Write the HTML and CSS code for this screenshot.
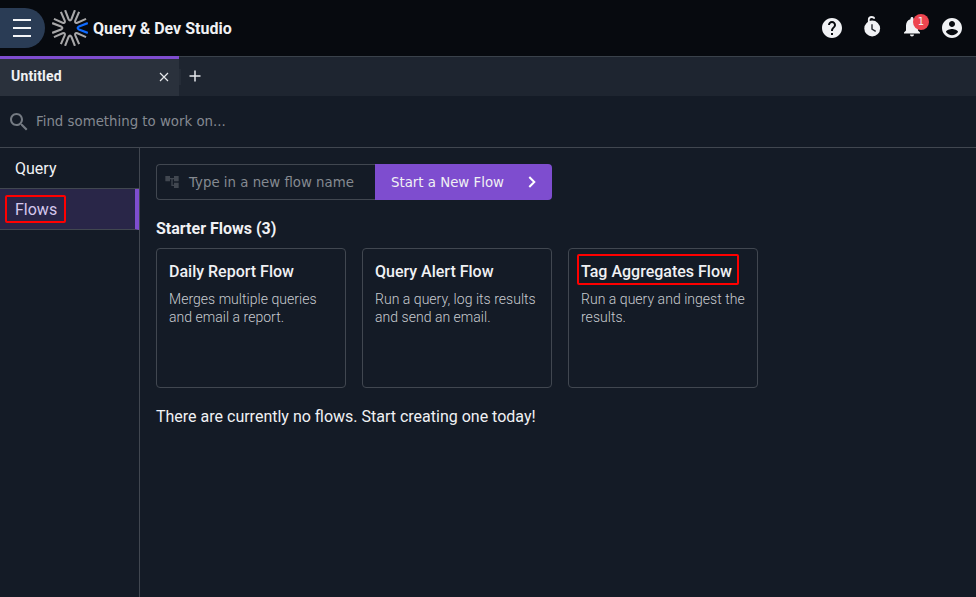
FILE: index.html
```html
<!DOCTYPE html>
<html lang="en">
<head>
<meta charset="utf-8">
<title>Query &amp; Dev Studio</title>
<link rel="stylesheet" href="styles.css">
</head>
<body>
<header class="topbar">
  <button class="menu" aria-label="Menu"><span></span><span></span><span></span></button>
  <svg class="logo" viewBox="-18 -18 36 36">
    <defs><path id="ray" d="M17.8-4.9 9-1.500Q6.200 0 9 1.500L17.8 4.9"/></defs>
    <use href="#ray" transform="rotate(45)"/><use href="#ray" transform="rotate(90)"/><use href="#ray" transform="rotate(135)"/><use href="#ray" transform="rotate(180)"/><use href="#ray" transform="rotate(225)"/><use href="#ray" transform="rotate(270)"/><use href="#ray" transform="rotate(315)"/><use class="blue" href="#ray"/>
  </svg>
  <h1>Query &amp; Dev Studio</h1>
  <nav class="actions">
    <svg viewBox="0 0 24 24"><path d="M12 2C6.48 2 2 6.48 2 12s4.480 10 10 10 10-4.480 10-10S17.520 2 12 2zm1 17h-2v-2h2v2zm2.070-7.750-.9.920C13.450 12.900 13 13.500 13 15h-2v-.5c0-1.100.450-2.100 1.170-2.830l1.240-1.260c.370-.360.590-.860.590-1.410 0-1.100-.9-2-2-2s-2 .9-2 2H8c0-2.210 1.790-4 4-4s4 1.790 4 4c0 .880-.360 1.680-.930 2.250z"/></svg>
    <svg viewBox="0 0 24 24"><circle cx="12.200" cy="12.500" r="7.900"/><path class="hook" d="M8.800 6V3.500Q8.800 1 11.500 1 14.200 1 14.200 2.800"/><path class="hands" d="M12 8.200v5l3.700 2.200"/></svg>
    <span class="alerts"><svg viewBox="0 0 24 24"><path d="M12 20.500c1.100 0 2-.9 2-2h-4c0 1.100.890 2 2 2zm6-6v-5c0-3.070-1.640-5.640-4.500-6.320V2.500C13.500 1.670 12.830 1 12 1s-1.500.670-1.500 1.500v.680C7.630 3.860 6 6.420 6 9.500v5l-2 2v1h16v-1l-2-2z"/></svg><b class="badge">1</b></span>
    <svg viewBox="0 0 24 24"><path d="M12 2C6.480 2 2 6.480 2 12s4.480 10 10 10 10-4.480 10-10S17.520 2 12 2zm0 3c1.660 0 3 1.340 3 3s-1.340 3-3 3-3-1.340-3-3 1.340-3 3-3zm0 14.200c-2.500 0-4.710-1.280-6-3.220.030-1.990 4-3.080 6-3.080 1.990 0 5.970 1.090 6 3.080-1.290 1.940-3.500 3.220-6 3.220z"/></svg>
  </nav>
</header>
<div class="tabs">
  <div class="tab">Untitled<svg viewBox="0 0 10 10"><path d="M1 1l8 8M9 1 1 9"/></svg></div>
  <div class="divider"></div>
  <svg class="plus" viewBox="0 0 12 12"><path d="M6 .5v11M.5 6h11"/></svg>
</div>
<div class="search">
  <svg viewBox="0 0 24 24"><path d="M15.500 14h-.790l-.280-.270C15.410 12.590 16 11.110 16 9.500 16 5.910 13.090 3 9.500 3S3 5.910 3 9.500 5.910 16 9.500 16c1.610 0 3.090-.590 4.230-1.570l.270.280v.790l5 4.990L20.490 19l-4.990-5zm-6 0C7.010 14 5 11.990 5 9.500S7.010 5 9.500 5 14 7.010 14 9.500 11.990 14 9.500 14z"/></svg>
  <span>Find something to work on...</span>
</div>
<div class="workspace">
  <aside>
    <div class="item">Query</div>
    <div class="item selected"><span class="mark">Flows</span></div>
  </aside>
  <main>
    <div class="create">
      <div class="name"><svg viewBox="0 0 24 24"><path d="M22 11V3h-7v3H9V3H2v8h7V8h2v10h4v3h7v-8h-7v3h-2V8h2v3z"/></svg><span>Type in a new flow name</span></div>
      <button class="start"><span>Start a New Flow</span><svg viewBox="0 0 8 12"><path d="M1.300 1l5 5-5 5"/></svg></button>
    </div>
    <h2>Starter Flows (3)</h2>
    <div class="cards">
      <article><h3>Daily Report Flow</h3><p>Merges multiple queries<br>and email a report.</p></article>
      <article><h3>Query Alert Flow</h3><p>Run a query, log its results<br>and send an email.</p></article>
      <article><h3><span class="mark">Tag Aggregates Flow</span></h3><p>Run a query and ingest the<br>results.</p></article>
    </div>
    <p class="empty">There are currently no flows. Start creating one today!</p>
  </main>
</div>
</body>
</html>
```
FILE: styles.css
```css
* { box-sizing: border-box; }
body { margin: 0; height: 597px; display: flex; flex-direction: column; overflow: hidden; background: #141b26; color: #f0f1f4; font: 16px Roboto, sans-serif; }
h1, h2, h3, p { margin: 0; }
button { border: 0; color: inherit; }
.topbar { height: 56px; flex: none; display: flex; align-items: center; background: #070a0f; }
.menu { width: 45px; height: 40px; padding: 0 0 0 13px; display: flex; flex-direction: column; justify-content: center; gap: 6px; background: #2a3c55; border-radius: 0 20px 20px 0; }
.menu span { width: 18px; height: 2px; background: #f4f5f7; }
.logo { width: 36px; height: 36px; margin-left: 7px; fill: none; stroke: #a7a7a8; stroke-width: 2.1; }
.logo .blue { stroke: #0f6bff; }
h1 { margin-left: 5px; padding-top: 2px; font-size: 16px; line-height: 20px; font-weight: 700; }
.actions { display: flex; gap: 16px; margin-left: auto; margin-right: 12px; }
.actions svg { display: block; width: 24px; height: 24px; fill: #f0f1f4; }
.actions .hook { fill: none; stroke: #f0f1f4; stroke-width: 1.8; }
.actions .hands { fill: none; stroke: #24282e; stroke-width: 1.4; }
.alerts { position: relative; }
.badge { position: absolute; left: 13px; top: -2px; width: 16px; height: 16px; border-radius: 50%; background: #ee4550; font: 10px/16px "DejaVu Sans", sans-serif; text-align: center; }
.tabs { height: 40px; flex: none; display: flex; align-items: center; background: #1e2530; border-top: 1px solid #3a424b; }
.tab { width: 179px; height: 40px; margin-top: -1px; padding: 0 10px 4px 11px; display: flex; align-items: center; justify-content: space-between; background: #2a313c; border-top: 3px solid #7e4dcf; font-size: 14px; line-height: 16px; font-weight: 700; letter-spacing: 0.16px; }
.tab svg { width: 10px; height: 10px; fill: none; stroke: #e6e8eb; stroke-width: 1.2; position: relative; top: 1px; }
.divider { width: 2px; height: 16px; background: #252c37; }
.plus { width: 12px; height: 12px; margin: 0 0 1px 8px; fill: none; stroke: #e6e8eb; stroke-width: 1.5; }
.search { height: 52px; flex: none; display: flex; align-items: center; padding: 0 0 1px 7px; border-bottom: 1px solid #414750; color: #848991; font: 13.333px "DejaVu Sans", sans-serif; }
.search svg { width: 24px; height: 24px; margin: 1px 5px 0 0; fill: #747a82; }
.workspace { flex: 1; display: flex; }
aside { width: 140px; border-right: 1px solid #414750; }
.item { height: 41px; display: flex; align-items: center; padding-left: 15px; border-bottom: 1px solid #414750; }
.selected { background: #292648; color: #d5c8ee; border-right: 4px solid #7e4dcf; padding-left: 5px; }
.mark { display: inline-block; border: 2px solid #f00; border-radius: 2px; }
.selected .mark { width: 61px; height: 28px; padding-left: 8px; line-height: 25px; }
main { flex: 1; padding: 16px; }
.create { display: flex; height: 36px; }
.name { width: 219px; display: flex; align-items: center; padding-left: 7px; border: 1px solid #414750; border-right: 0; border-radius: 4px 0 0 4px; color: #858a91; font: 13.333px "DejaVu Sans", sans-serif; }
.name svg { width: 16px; height: 16px; margin-right: 9px; fill: #414750; }
.start { width: 177px; padding: 0 15px 0 16px; display: flex; align-items: center; justify-content: space-between; border-radius: 0 4px 4px 0; background: #7e4dcf; font: 13.333px "DejaVu Sans", sans-serif; }
.start svg { width: 8px; height: 12px; margin-right: 1px; fill: none; stroke: #fff; stroke-width: 2; }
h2 { margin-top: 18px; font-size: 16px; line-height: 21px; font-weight: 700; }
.cards { display: flex; gap: 16px; margin-top: 9px; }
article { width: 190px; height: 140px; padding: 12px; border: 1px solid #414750; border-radius: 4px; }
h3 { height: 22px; font-size: 16px; line-height: 21px; font-weight: 500; white-space: nowrap; }
h3 .mark { width: 162px; height: 31px; margin: -7px 0 0 -4px; padding: 0 2px; line-height: 31px; }
article p { margin-top: 7px; font-size: 14px; line-height: 18px; font-weight: 300; letter-spacing: 0.03px; color: #c9ccd1; white-space: nowrap; }
.empty { margin-top: 18px; line-height: 21px; }
```
